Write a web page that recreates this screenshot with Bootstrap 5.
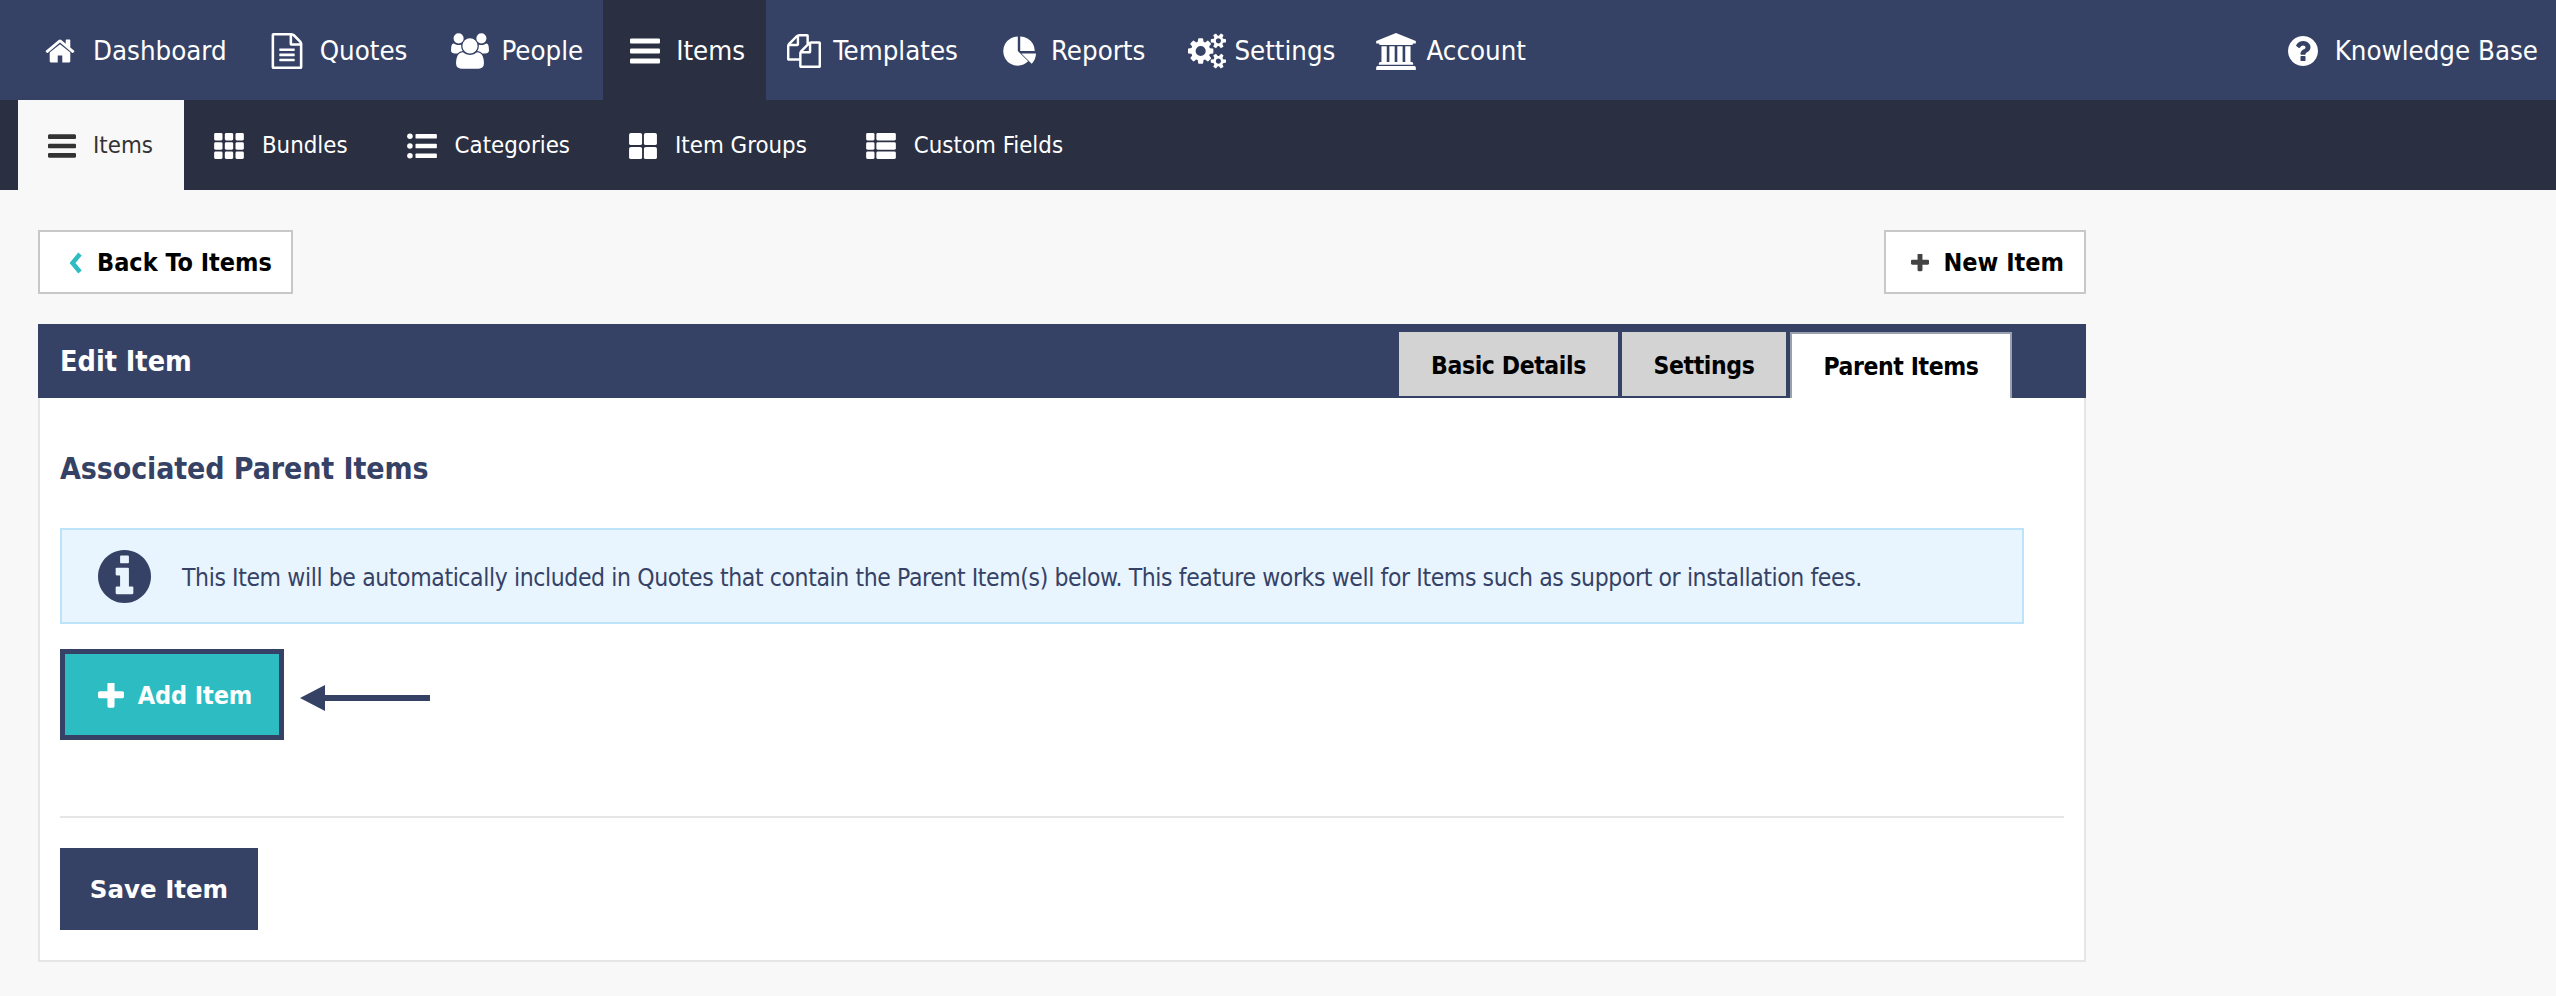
<!DOCTYPE html>
<html lang="en"><head><meta charset="utf-8"><title>Edit Item</title>
<link rel="stylesheet" href="https://cdn.jsdelivr.net/npm/bootstrap@5.3.0/dist/css/bootstrap.min.css">
<style>
body{background:#f8f8f8;font-family:"DejaVu Sans Condensed","DejaVu Sans",sans-serif;font-stretch:condensed;color:#364265;min-height:996px;overflow:hidden}
svg.ico{fill:currentColor;flex:none;display:block}
.topbar{background:#364265;height:100px;padding-left:22px}
.toplink{color:#fff;text-decoration:none;font-size:27.4px;height:100px;padding:2px 22px 0}
.toplink.on{background:#2a2f42;margin:0 -1px 0 -2px;padding:2px 21px 0 27px}
.toplink.kb{padding-right:18px}
.toplink.trimr{padding-left:21px;padding-right:21px}
.toplink.triml{padding-left:20px}
.g8{gap:8px}.g10{gap:10px}.g12{gap:12px}.g16{gap:16px}.g15{gap:15px}.g17{gap:17px}
.subbar{background:#2a2f42;height:90px;padding-left:18px}
.sublink{color:#fff;text-decoration:none;font-size:23.8px;height:90px;padding:2px 29px 0;gap:17px}
.sublink.on{background:#f8f8f8;color:#333;padding:2px 31px 0 30px}
.pagearea{width:2048px;margin-left:38px;padding-top:40px}
.ghostbtn{background:#fff;border:2px solid #c8c8c8;border-radius:0;height:64px;color:#000;font-weight:700;font-size:25px;padding:2px 20px 0 25px;gap:15px}
.ghostbtn.backbtn{padding-left:29px;padding-right:19px;gap:14px}
.plusdark{color:#444}
.panelhead{background:#364265;height:74px;margin-top:30px;padding:0 74px 0 22px}
.paneltitle{color:#fff;font-weight:700;font-size:28.500px;margin:3px 0 0}
.tabitem{background:#d3d3d3;color:#000;font-weight:700;font-size:24.5px;letter-spacing:-.4px;height:64px;border:0;border-radius:0;margin:0 0 2px 4px;padding:4px 0 0}
.tabitem.on{background:#fff;border:2px solid #9aa0ad;border-bottom:0;height:66px;margin-bottom:0;padding-top:2px}
.tabitem:hover,.tabitem.on:hover{color:#000}
.w-basic{width:219px}.w-settings{width:164px}.w-parent{width:222px}
.panelbody{background:#fff;border:2px solid #e6e6e6;border-top:0;height:564px;padding:51px 20px 0 20px}
.seclabel{font-size:30px;font-weight:700;line-height:40px;letter-spacing:-.1px;margin:0 0 39px}
.notebox{background:#e8f5fe;border:2px solid #bce4f9;border-radius:0;width:1964px;height:96px;margin:0;padding:4px 0 0 36px;gap:31px;color:#364265;font-size:24.500px;letter-spacing:-.39px}
.notebox svg{margin-top:-4px}
.addrow{margin-top:25px;gap:16px}
.addbtn{background:#2dbcc2;border:5px solid #364265;border-radius:0;color:#fff;font-weight:700;font-size:25px;letter-spacing:-.1px;width:224px;height:91px;padding:2px 0 0 6px;gap:14px}
.addarrow{margin-top:6px}
.rule{border:0;border-top:2px solid #e6e6e6;opacity:1;margin:76px 0 30px}
.savebtn{background:#364265;color:#fff;border:0;border-radius:0;font-family:"DejaVu Sans",sans-serif;font-stretch:normal;font-weight:700;font-size:24.500px;width:198px;height:82px;padding:2px 0 0}
</style></head><body>
<svg width="0" height="0" class="position-absolute">
<symbol id="i-home" viewBox="0 0 1792 1792"><path d="M1472 992v480q0 26-19 45t-45 19h-384v-384h-256v384h-384q-26 0-45-19t-19-45v-480q0-1 .5-3t.5-3l575-474 575 474q1 2 1 6zm223-69l-62 74q-8 9-21 11h-3q-13 0-21-7l-692-577-692 577q-12 8-24 7-13-2-21-11l-62-74q-8-10-7-23.500t11-21.500l719-599q32-26 76-26t76 26l244 204v-195q0-14 9-23t23-9h192q14 0 23 9t9 23v408l219 182q10 8 11 21.500t-7 23.500z"/></symbol>
<symbol id="i-file" viewBox="128 0 1536 1792"><path d="M1596 380q28 28 48 76t20 88v1152q0 40-28 68t-68 28h-1344q-40 0-68-28t-28-68v-1600q0-40 28-68t68-28h896q40 0 88 20t76 48zm-444-244v376h376q-10-29-22-41l-313-313q-12-12-41-22zm384 1528v-1024h-416q-40 0-68-28t-28-68v-416h-768v1536h1280zm-1024-864q0-14 9-23t23-9h704q14 0 23 9t9 23v64q0 14-9 23t-23 9h-704q-14 0-23-9t-9-23v-64zm736 224q14 0 23 9t9 23v64q0 14-9 23t-23 9h-704q-14 0-23-9t-9-23v-64q0-14 9-23t23-9h704zm0 256q14 0 23 9t9 23v64q0 14-9 23t-23 9h-704q-14 0-23-9t-9-23v-64q0-14 9-23t23-9h704z"/></symbol>
<symbol id="i-users" viewBox="0 0 1920 1792"><path d="M593 896q-162 5-265 128h-134q-82 0-138-40.500t-56-118.500q0-353 124-353 6 0 43.500 21t97.500 42.500 119 21.500q67 0 133-23-5 37-5 66 0 139 81 256zm1071 637q0 120-73 189.500t-194 69.500h-874q-121 0-194-69.500t-73-189.500q0-53 3.500-103.500t14-109 26.500-108.500 43-97.500 62-81 85.500-53.500 111.500-20q10 0 43 21.500t73 48 107 48 135 21.500 135-21.500 107-48 73-48 43-21.500q61 0 111.500 20t85.500 53.500 62 81 43 97.500 26.500 108.500 14 109 3.500 103.500zm-1024-1277q0 106-75 181t-181 75-181-75-75-181 75-181 181-75 181 75 75 181zm704 384q0 159-112.500 271.500t-271.500 112.500-271.500-112.500-112.500-271.500 112.500-271.500 271.500-112.500 271.500 112.500 112.500 271.500zm576 225q0 78-56 118.500t-138 40.500h-134q-103-123-265-128 81-117 81-256 0-29-5-66 66 23 133 23 59 0 119-21.500t97.500-42.500 43.500-21q124 0 124 353zm-128-609q0 106-75 181t-181 75-181-75-75-181 75-181 181-75 181 75 75 181z"/></symbol>
<symbol id="i-bars" viewBox="128 256 1536 1280"><path d="M1664 1344v128q0 26-19 45t-45 19h-1408q-26 0-45-19t-19-45v-128q0-26 19-45t45-19h1408q26 0 45 19t19 45zm0-512v128q0 26-19 45t-45 19h-1408q-26 0-45-19t-19-45v-128q0-26 19-45t45-19h1408q26 0 45 19t19 45zm0-512v128q0 26-19 45t-45 19h-1408q-26 0-45-19t-19-45v-128q0-26 19-45t45-19h1408q26 0 45 19t19 45z"/></symbol>
<symbol id="i-files" viewBox="0 0 1792 1792"><path d="M1696 384q40 0 68 28t28 68v1216q0 40-28 68t-68 28h-960q-40 0-68-28t-28-68v-288h-544q-40 0-68-28t-28-68v-672q0-40 20-88t48-76l408-408q28-28 76-48t88-20h416q40 0 68 28t28 68v328q68-40 128-40h416zm-544 213l-299 299h299v-299zm-640-384l-299 299h299v-299zm196 647l316-316v-416h-384v416q0 40-28 68t-68 28h-416v640h512v-256q0-40 20-88t48-76zm956 804v-1152h-384v416q0 40-28 68t-68 28h-416v640h896z"/></symbol>
<symbol id="i-pie" viewBox="0 0 1792 1792"><path d="M832 894l546 546q-106 108-247.500 168t-298.500 60q-209 0-385.500-103t-279.500-279.500-103-385.500 103-385.500 279.500-279.500 385.500-103v762zm187 130h773q0 157-60 298.500t-168 247.500zm709-128h-768v-768q209 0 385.500 103t279.500 279.500 103 385.500z"/></symbol>
<symbol id="i-cogs" viewBox="0 0 1920 1792"><path d="M896 896q0-106-75-181t-181-75-181 75-75 181 75 181 181 75 181-75 75-181zm768 512q0-52-38-90t-90-38-90 38-38 90q0 53 37.500 90.500t90.500 37.500 90.500-37.500 37.500-90.500zm0-1024q0-52-38-90t-90-38-90 38-38 90q0 53 37.500 90.500t90.500 37.500 90.500-37.500 37.500-90.500zm-384 421v185q0 10-7 19.500t-16 10.500l-155 24q-11 35-32 76 34 48 90 115 7 11 7 20 0 12-7 19-23 30-82.500 89.500t-78.500 59.500q-11 0-21-7l-115-90q-37 19-77 31-11 108-23 155-7 24-30 24h-186q-11 0-20-7.500t-10-17.500l-23-153q-34-10-75-31l-118 89q-7 7-20 7-11 0-21-8-144-133-144-160 0-9 7-19 10-14 41-53t47-61q-23-44-35-82l-152-24q-10-1-17-9.500t-7-19.500v-185q0-10 7-19.500t16-10.500l155-24q11-35 32-76-34-48-90-115-7-11-7-20 0-12 7-20 22-30 82-89t79-59q11 0 21 7l115 90q34-18 77-32 11-108 23-154 7-24 30-24h186q11 0 20 7.500t10 17.500l23 153q34 10 75 31l118-89q8-7 20-7 11 0 21 8 144 133 144 160 0 8-7 19-12 16-42 54t-45 60q23 48 34 82l152 23q10 2 17 10.500t7 19.500zm640 533v140q0 16-149 31-12 27-30 52 51 113 51 138 0 4-4 7-122 71-124 71-8 0-46-47t-52-68q-20 2-30 2t-30-2q-14 21-52 68t-46 47q-2 0-124-71-4-3-4-7 0-25 51-138-18-25-30-52-149-15-149-31v-140q0-16 149-31 13-29 30-52-51-113-51-138 0-4 4-7 4-2 35-20t59-34 30-16q8 0 46 46.500t52 67.500q20-2 30-2t30 2q51-71 92-112l6-2q4 0 124 70 4 3 4 7 0 25-51 138 17 23 30 52 149 15 149 31zm0-1024v140q0 16-149 31-12 27-30 52 51 113 51 138 0 4-4 7-122 71-124 71-8 0-46-47t-52-68q-20 2-30 2t-30-2q-14 21-52 68t-46 47q-2 0-124-71-4-3-4-7 0-25 51-138-18-25-30-52-149-15-149-31v-140q0-16 149-31 13-29 30-52-51-113-51-138 0-4 4-7 4-2 35-20t59-34 30-16q8 0 46 46.500t52 67.500q20-2 30-2t30 2q51-71 92-112l6-2q4 0 124 70 4 3 4 7 0 25-51 138 17 23 30 52 149 15 149 31z"/></symbol>
<symbol id="i-bank" viewBox="0 0 1920 1792"><path d="M960 0l960 384v128h-128q0 26-20.500 45t-48.500 19h-1526q-28 0-48.500-19t-20.500-45h-128v-128zm-704 640h256v768h128v-768h256v768h128v-768h256v768h128v-768h256v768h59q28 0 48.500 19t20.500 45v64h-1664v-64q0-26 20.500-45t48.500-19h59v-768zm1595 960q28 0 48.500 19t20.500 45v128h-1920v-128q0-26 20.500-45t48.500-19h1782z"/></symbol>
<symbol id="i-help" viewBox="128 128 1536 1536"><path d="M1024 1376v-192q0-14-9-23t-23-9h-192q-14 0-23 9t-9 23v192q0 14 9 23t23 9h192q14 0 23-9t9-23zm256-672q0-88-55.500-163t-138.500-116-170-41q-243 0-371 213-15 24 8 42l132 100q7 6 19 6 16 0 25-12 53-68 86-92 34-24 86-24 48 0 85.500 26t37.500 59q0 38-20 61t-68 45q-63 28-115.500 86.500t-52.500 125.500v36q0 14 9 23t23 9h192q14 0 23-9t9-23q0-19 21.500-49.500t54.500-49.500q32-18 49-28.500t46-35 44.500-48 28-60.500 12.500-81zm384 192q0 209-103 385.500t-279.500 279.500-385.500 103-385.500-103-279.500-279.500-103-385.500 103-385.500 279.500-279.500 385.500-103 385.500 103 279.500 279.500 103 385.500z"/></symbol>
<symbol id="i-info" viewBox="128 128 1536 1536"><path d="M1152 1376v-160q0-14-9-23t-23-9h-96v-512q0-14-9-23t-23-9h-320q-14 0-23 9t-9 23v160q0 14 9 23t23 9h96v320h-96q-14 0-23 9t-9 23v160q0 14 9 23t23 9h448q14 0 23-9t9-23zm-128-896v-160q0-14-9-23t-23-9h-192q-14 0-23 9t-9 23v160q0 14 9 23t23 9h192q14 0 23-9t9-23zm640 416q0 209-103 385.500t-279.500 279.500-385.500 103-385.500-103-279.500-279.500-103-385.500 103-385.500 279.500-279.500 385.500-103 385.500 103 279.500 279.500 103 385.500z"/></symbol>
<symbol id="i-plus" viewBox="192 192 1408 1408"><path d="M1600 736v192q0 40-28 68t-68 28h-416v416q0 40-28 68t-68 28h-192q-40 0-68-28t-28-68v-416h-416q-40 0-68-28t-28-68v-192q0-40 28-68t68-28h416v-416q0-40 28-68t68-28h192q40 0 68 28t28 68v416h416q40 0 68 28t28 68z"/></symbol>
<symbol id="i-th" viewBox="0 0 32 28"><rect x="0" y="0" width="9" height="8" rx="1.500"/><rect x="11.500" y="0" width="9" height="8" rx="1.500"/><rect x="23" y="0" width="9" height="8" rx="1.500"/><rect x="0" y="10" width="9" height="8" rx="1.500"/><rect x="11.500" y="10" width="9" height="8" rx="1.500"/><rect x="23" y="10" width="9" height="8" rx="1.500"/><rect x="0" y="20" width="9" height="8" rx="1.500"/><rect x="11.500" y="20" width="9" height="8" rx="1.500"/><rect x="23" y="20" width="9" height="8" rx="1.500"/></symbol>
<symbol id="i-list" viewBox="0 0 32 28"><circle cx="3" cy="3.500" r="3"/><circle cx="3" cy="14" r="3"/><circle cx="3" cy="24.500" r="3"/><rect x="9" y="1" width="23" height="5" rx="1"/><rect x="9" y="11.500" width="23" height="5" rx="1"/><rect x="9" y="22" width="23" height="5" rx="1"/></symbol>
<symbol id="i-thl" viewBox="0 0 30 28"><rect x="0" y="0" width="14" height="13" rx="2"/><rect x="16" y="0" width="14" height="13" rx="2"/><rect x="0" y="15" width="14" height="13" rx="2"/><rect x="16" y="15" width="14" height="13" rx="2"/></symbol>
<symbol id="i-tlist" viewBox="0 0 32 28"><rect x="0" y="0" width="9" height="8" rx="1.500"/><rect x="11" y="0" width="21" height="8" rx="1.500"/><rect x="0" y="10" width="9" height="8" rx="1.500"/><rect x="11" y="10" width="21" height="8" rx="1.500"/><rect x="0" y="20" width="9" height="8" rx="1.500"/><rect x="11" y="20" width="21" height="8" rx="1.500"/></symbol>
</svg>
<nav class="topbar d-flex align-items-center">
<a class="toplink g17 d-flex align-items-center" href="#"><svg class="ico" width="32" height="32"><use href="#i-home"/></svg>Dashboard</a>
<a class="toplink g17 d-flex align-items-center" href="#"><svg class="ico" width="32" height="36"><use href="#i-file"/></svg>Quotes</a>
<a class="toplink g12 d-flex align-items-center" href="#"><svg class="ico" width="38" height="36"><use href="#i-users"/></svg>People</a>
<a class="toplink on g16 d-flex align-items-center" href="#"><svg class="ico" width="30" height="26"><use href="#i-bars"/></svg>Items</a>
<a class="toplink g12 d-flex align-items-center" href="#"><svg class="ico" width="34" height="36"><use href="#i-files"/></svg>Templates</a>
<a class="toplink g15 d-flex align-items-center" href="#"><svg class="ico" width="34" height="34"><use href="#i-pie"/></svg>Reports</a>
<a class="toplink trimr g8 d-flex align-items-center" href="#"><svg class="ico" width="38" height="36"><use href="#i-cogs"/></svg>Settings</a>
<a class="toplink triml g10 d-flex align-items-center" href="#"><svg class="ico" width="40" height="37"><use href="#i-bank"/></svg>Account</a>
<a class="toplink kb g17 ms-auto d-flex align-items-center" href="#"><svg class="ico" width="30" height="30"><use href="#i-help"/></svg>Knowledge Base</a>
</nav>
<nav class="subbar d-flex align-items-center">
<a class="sublink on d-flex align-items-center" href="#"><svg class="ico" width="28" height="24"><use href="#i-bars"/></svg>Items</a>
<a class="sublink d-flex align-items-center" href="#"><svg class="ico" width="32" height="26"><use href="#i-th"/></svg>Bundles</a>
<a class="sublink d-flex align-items-center" href="#"><svg class="ico" width="32" height="26"><use href="#i-list"/></svg>Categories</a>
<a class="sublink d-flex align-items-center" href="#"><svg class="ico" width="30" height="26"><use href="#i-thl"/></svg>Item Groups</a>
<a class="sublink d-flex align-items-center" href="#"><svg class="ico" width="32" height="26"><use href="#i-tlist"/></svg>Custom Fields</a>
</nav>
<main class="pagearea">
<div class="d-flex justify-content-between">
<button class="btn ghostbtn backbtn d-flex align-items-center"><svg width="14" height="24" viewBox="0 0 14 24"><path d="M11 3 3.500 12 11 21" fill="none" stroke="#2dbcc2" stroke-width="4.500"/></svg>Back To Items</button>
<button class="btn ghostbtn d-flex align-items-center"><svg class="ico plusdark" width="18" height="18"><use href="#i-plus"/></svg>New Item</button>
</div>
<header class="panelhead d-flex justify-content-between">
<h1 class="paneltitle align-self-center">Edit Item</h1>
<div class="d-flex align-items-end">
<button class="btn tabitem w-basic">Basic Details</button>
<button class="btn tabitem w-settings">Settings</button>
<button class="btn tabitem on w-parent">Parent Items</button>
</div>
</header>
<section class="panelbody">
<h2 class="seclabel">Associated Parent Items</h2>
<div class="alert notebox d-flex align-items-center"><svg class="ico" width="53" height="53"><use href="#i-info"/></svg><span>This Item will be automatically included in Quotes that contain the Parent Item(s) below. This feature works well for Items such as support or installation fees.</span></div>
<div class="addrow d-flex align-items-center">
<button class="btn addbtn d-flex align-items-center justify-content-center"><svg class="ico" width="26" height="26"><use href="#i-plus"/></svg>Add Item</button>
<svg class="addarrow" width="130" height="26" viewBox="0 0 130 26" fill="#364265"><path d="M0 13 25 0V10H130V16H25V26Z"/></svg>
</div>
<hr class="rule">
<button class="btn savebtn">Save Item</button>
</section>
</main>
<script src="https://cdn.jsdelivr.net/npm/bootstrap@5.3.0/dist/js/bootstrap.bundle.min.js"></script>
</body></html>
